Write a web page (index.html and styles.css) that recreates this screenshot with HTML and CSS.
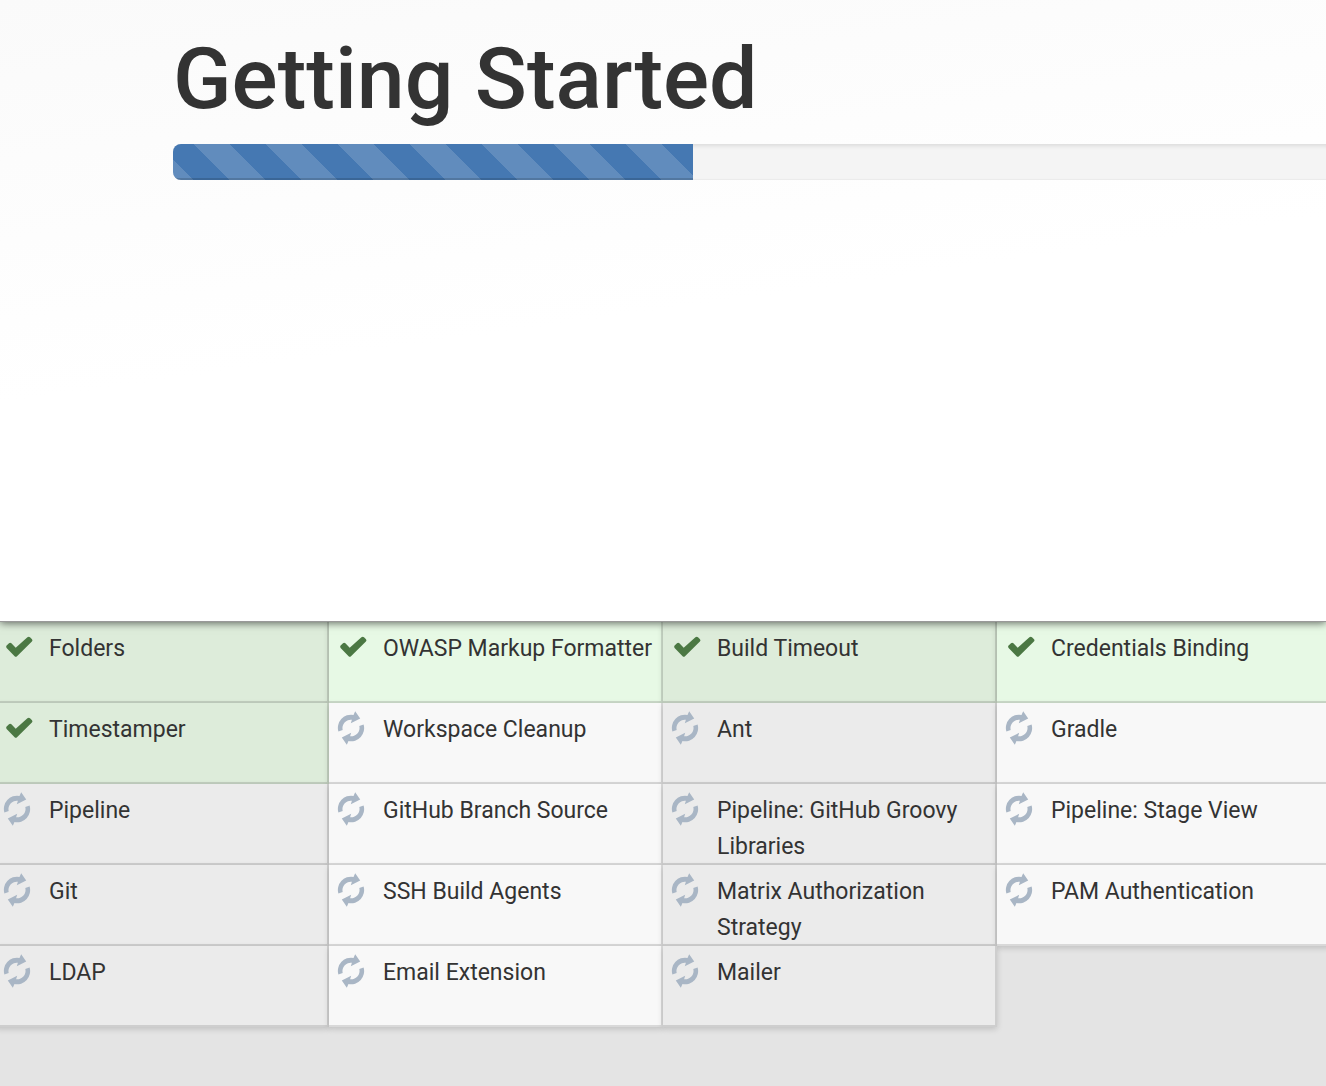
FILE: index.html
```
<!DOCTYPE html>
<html lang="en">
<head>
<meta charset="utf-8">
<meta name="viewport" content="width=device-width, initial-scale=1">
<title>Getting Started</title>
<link rel="stylesheet" href="styles.css">
</head>
<body>
<svg class="sprite" aria-hidden="true">
  <symbol id="check" viewBox="0 0 28 22">
    <path d="M1.6 9.6 4 7.3Q5.2 6.2 6.4 7.3L10.7 11.8 22.4 1.2Q23.8.1 25 1.2L27 3.2Q28 4.4 26.9 5.6L12 20.2Q10.8 21.3 9.6 20.2L1.6 12Q.6 10.8 1.6 9.6Z"/>
  </symbol>
  <symbol id="sync" viewBox="0 0 28 34">
    <path id="half" d="M1.4 20.6A13.2 13.2 0 0 1 16.5 3.9L18.2.2 23.2 7.4 13.8 12.2 14.9 8.8A8.3 8.3 0 0 0 5.7 19Z"/>
    <use href="#half" transform="rotate(180 14 17)"/>
  </symbol>
</svg>
<header class="intro">
  <h1 class="title">Getting Started</h1>
  <div class="progress" role="progressbar" aria-label="Installation progress" aria-valuenow="45" aria-valuemin="0" aria-valuemax="100">
    <div class="progress-fill" style="width: 44.8%"></div>
  </div>
</header>
<main class="plugins-wrap">
  <ul class="plugins">
    <li class="plugin done"><svg class="icon"><use href="#check"/></svg><span>Folders</span></li>
    <li class="plugin done"><svg class="icon"><use href="#check"/></svg><span>OWASP Markup Formatter</span></li>
    <li class="plugin done"><svg class="icon"><use href="#check"/></svg><span>Build Timeout</span></li>
    <li class="plugin done"><svg class="icon"><use href="#check"/></svg><span>Credentials Binding</span></li>
    <li class="plugin done"><svg class="icon"><use href="#check"/></svg><span>Timestamper</span></li>
    <li class="plugin"><svg class="icon"><use href="#sync"/></svg><span>Workspace Cleanup</span></li>
    <li class="plugin"><svg class="icon"><use href="#sync"/></svg><span>Ant</span></li>
    <li class="plugin"><svg class="icon"><use href="#sync"/></svg><span>Gradle</span></li>
    <li class="plugin"><svg class="icon"><use href="#sync"/></svg><span>Pipeline</span></li>
    <li class="plugin"><svg class="icon"><use href="#sync"/></svg><span>GitHub Branch Source</span></li>
    <li class="plugin"><svg class="icon"><use href="#sync"/></svg><span>Pipeline: GitHub Groovy Libraries</span></li>
    <li class="plugin"><svg class="icon"><use href="#sync"/></svg><span>Pipeline: Stage View</span></li>
    <li class="plugin"><svg class="icon"><use href="#sync"/></svg><span>Git</span></li>
    <li class="plugin"><svg class="icon"><use href="#sync"/></svg><span>SSH Build Agents</span></li>
    <li class="plugin"><svg class="icon"><use href="#sync"/></svg><span>Matrix Authorization Strategy</span></li>
    <li class="plugin"><svg class="icon"><use href="#sync"/></svg><span>PAM Authentication</span></li>
    <li class="plugin"><svg class="icon"><use href="#sync"/></svg><span>LDAP</span></li>
    <li class="plugin"><svg class="icon"><use href="#sync"/></svg><span>Email Extension</span></li>
    <li class="plugin"><svg class="icon"><use href="#sync"/></svg><span>Mailer</span></li>
  </ul>
</main>
</body>
</html>
```
FILE: styles.css
```
* {
  box-sizing: border-box;
}

body {
  margin: 0;
  min-height: 100vh;
  overflow-x: hidden;
  background: #e4e4e4;
  color: #333;
  font-family: Roboto, "Liberation Sans", sans-serif;
}

.sprite {
  display: none;
}

.intro {
  position: relative;
  padding: 29px 0 441px 173px;
  background: linear-gradient(172deg, #fafafa, #fff 50%);
  border-bottom: 1px solid #999;
  box-shadow: 0 1px 8px rgba(0, 0, 0, 0.6);
}

.title {
  margin: 0 0 15px;
  font-size: 86px;
  font-weight: 500;
  line-height: 100px;
}

.progress {
  height: 36px;
  margin-right: -8px;
  overflow: hidden;
  border-radius: 8px;
  background: #f4f4f4;
  box-shadow: inset 0 2px 4px rgba(0, 0, 0, 0.1), inset 0 -1px #eee;
}

.progress-fill {
  height: 100%;
  background-color: #4578b2;
  background-image: linear-gradient(45deg,
    rgba(255, 255, 255, 0.15) 25%, transparent 25%,
    transparent 50%, rgba(255, 255, 255, 0.15) 50%,
    rgba(255, 255, 255, 0.15) 75%, transparent 75%);
  background-size: 72px 72px;
  background-position: -16px 100%;
  box-shadow: inset 0 -2px rgba(0, 0, 0, 0.15);
}

.plugins-wrap {
  padding-bottom: 59px;
}

/* The list bleeds past both edges of the window. */
.plugins {
  display: grid;
  grid-template-columns: repeat(4, 1fr);
  grid-auto-rows: 81px;
  margin: 0 -5px;
  padding: 0;
  list-style: none;
}

.plugin {
  display: flex;
  gap: 18px;
  padding: 9px 4px 0 8px;
  background: #f8f8f8;
  border: solid rgba(0, 0, 0, 0.12);
  border-width: 0 2px 2px 0;
  box-shadow: 0 2px 6px rgba(0, 0, 0, 0.16);
  font-size: 23px;
  line-height: 36px;
}

.plugin:nth-child(odd) {
  background: #ebebeb;
}

.plugin.done {
  background: #e7f9e5;
}

.plugin.done:nth-child(odd) {
  background: #ddecda;
}

.icon {
  flex: none;
  width: 28px;
  height: 34px;
  margin-top: -1px;
  fill: #a9b6c5;
}

.done .icon {
  margin: -1px -2px 0 2px;
  fill: #4b7843;
}
```
